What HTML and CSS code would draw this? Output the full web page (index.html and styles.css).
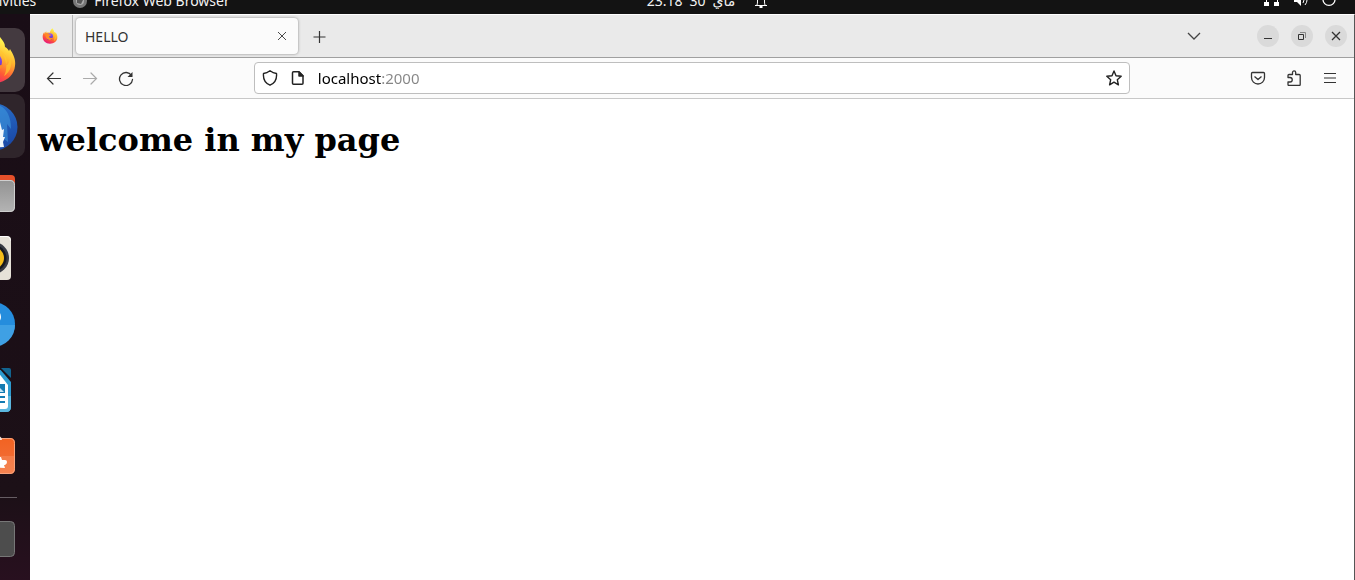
FILE: index.html
```html
<!DOCTYPE html>
<html lang="en">
<head>
<meta charset="utf-8">
<title>HELLO</title>
<link rel="stylesheet" href="styles.css">
</head>
<body>
<svg width="0" height="0" class="defs" aria-hidden="true">
  <defs>
    <linearGradient id="flame" x1="0.8" y1="0" x2="0.3" y2="1">
      <stop offset="0.1" stop-color="#fff44f"/><stop offset="0.4" stop-color="#ffb62e"/>
      <stop offset="0.68" stop-color="#ff5a36"/><stop offset="1" stop-color="#e6127f"/>
    </linearGradient>
    <linearGradient id="globe" x1="0" y1="0" x2="0" y2="1">
      <stop offset="0" stop-color="#9059ff"/><stop offset="1" stop-color="#5b2bb5"/>
    </linearGradient>
    <linearGradient id="bird" x1="0" y1="0" x2="0.4" y2="1">
      <stop offset="0" stop-color="#2b78d0"/><stop offset="1" stop-color="#1b4aa8"/>
    </linearGradient>
    <linearGradient id="steel" x1="0" y1="0" x2="0" y2="1">
      <stop offset="0" stop-color="#929292"/><stop offset="1" stop-color="#b4b4b4"/>
    </linearGradient>
    <linearGradient id="bag" x1="0" y1="0" x2="0" y2="1">
      <stop offset="0" stop-color="#f26322"/><stop offset="0.5" stop-color="#f26a30"/>
      <stop offset="0.5" stop-color="#f47c48"/><stop offset="1" stop-color="#f58350"/>
    </linearGradient>
    <symbol id="firefox" viewBox="0 0 48 48">
      <path fill="url(#flame)" d="M31 1c3 4 5 6 5 10 2 1 3 2 4 4l1-2c3 5 6 10 5 17C45 40 36 47 24 47 11 47 2 38 2 26c0-6 2-10 5-14l1 5c1-3 3-5 5-7v4c4-1 7-1 10 0 2-5 4-9 8-13z"/>
      <circle cx="23" cy="26" r="10" fill="url(#globe)"/>
      <path fill="#ff8a26" d="M12 16c4-1 7 0 9 3l6 1c0 3-4 4-6 5 0 3 3 6 7 5 3 0 4-2 6-1-2 5-8 8-14 6-8-2-12-12-8-19z"/>
      <path fill="#ffc72e" d="M30 14c7 3 9 9 7 16 3-2 4-5 4-9 3 8 0 15-6 19 4-7 3-19-5-26z" opacity=".7"/>
    </symbol>
  </defs>
</svg>

<div class="desktop">
  <header class="topbar">
    <div class="topbar-left">
      <button class="plain">Activities</button>
      <button class="plain app-menu">
        <svg width="14" height="14" viewBox="0 0 14 14"><circle cx="7" cy="7" r="7" fill="#777"/><circle cx="7" cy="7" r="4" fill="#aaa"/><path d="M4 5l6 1-2 4-4-1z" fill="#555"/></svg>
        Firefox Web Browser
      </button>
    </div>
    <button class="plain clock">
      <span>23:18</span><span>30</span><bdi>ماي</bdi>
      <svg class="bell" width="14" height="16" viewBox="0 0 14 16" fill="none" stroke="#fff"><path d="M1 12.500h12M3 12C4 10 3 6 4 4s5-2 6 0 0 6 1 8"/><path d="M5.500 14h3" stroke-width="2"/></svg>
    </button>
    <div class="topbar-right">
      <svg width="16" height="16" viewBox="0 0 16 16"><path d="M8 0v5M2.500 12V5h11v7" fill="none" stroke="#fff"/><path d="M0 10h5v4H0zM10 10h5v4h-5zM5 0h5v4H5z" fill="#fff"/></svg>
      <svg width="16" height="16" viewBox="0 0 16 16"><path d="M1 5h3l4-4v13l-4-4H1z" fill="#fff"/><path d="M10 5q2 3 0 6M12 3q4 5 0 10" fill="none" stroke="#fff"/></svg>
      <svg width="14" height="14" viewBox="0 0 14 14" fill="none" stroke="#fff" stroke-width="1.300"><path d="M3 2a6 6 0 1 0 8 0M7 0v6"/></svg>
    </div>
  </header>

  <div class="workspace">
    <nav class="dock" aria-label="Dock">
      <button class="tile tile-focused" aria-label="Firefox"><svg width="48" height="48"><use href="#firefox"/></svg></button>
      <button class="tile tile-open" aria-label="Thunderbird"><svg width="64" height="64" viewBox="0 0 64 64"><circle cx="33" cy="33" r="23.500" fill="url(#bird)"/><path d="M34 10q16 4 16 25l-4-5 1 18-7-5z" fill="#3f9be0" opacity=".55"/><path d="M30 22l6 2 3 4 2 8 2-1-1 8 2 0-2 5 1 5-13 1z" fill="#f2f7fc"/></svg></button>
      <button class="tile" aria-label="Files"><svg width="64" height="64" viewBox="0 0 64 64"><path d="M10 15h40q4 0 4 4v14H10z" fill="#e5502a"/><path d="M10 20h39q5 0 5 5v22q0 5-5 5H10z" fill="url(#steel)"/><path d="M10 20.500h39q4.500 0 4.500 5v21q0 5-5 5H10" fill="none" stroke="#cfcfcf"/></svg></button>
      <button class="tile" aria-label="Rhythmbox"><svg width="64" height="64" viewBox="0 0 64 64"><rect x="14" y="10" width="36" height="44" rx="4" fill="#e6e2d8"/><path d="M18 10.500h28q3.500 0 3.500 4" fill="none" stroke="#fff"/><circle cx="32" cy="32" r="16" fill="#383b43"/><circle cx="32" cy="32" r="13.500" fill="#17191f"/><circle cx="32" cy="32" r="11" fill="#f5bd18"/></svg></button>
      <button class="tile" aria-label="Help"><svg width="64" height="64" viewBox="0 0 64 64"><circle cx="32" cy="32" r="22" fill="#258ddd"/><path d="M10 33h44a22 22 0 0 1-44 0z" fill="#3fa0e4"/><path d="M25 26q0-7 7-7 6 0 6.500 6 0 4-6.500 8v5" fill="none" stroke="#fff" stroke-width="3"/></svg></button>
      <button class="tile" aria-label="LibreOffice Writer"><svg width="64" height="64" viewBox="0 0 64 64"><path d="M14 10h24l12 14v25q0 5-5 5H14z" fill="#2d9bcf"/><path d="M14 38h36v11q0 5-5 5H14z" fill="#5cb7de"/><path d="M40 10h8q2 0 2 2v8z" fill="#12648f"/><path d="M16 13h20l11 14v21q0 3-3 3H16z" fill="#fff"/><path d="M31 26h13v9H31zM18 38h26v2H18zM18 43h26v2H18z" fill="#147bb2"/><path d="M32 34l6-5 5 5z" fill="#bfe4f5"/></svg></button>
      <button class="tile" aria-label="Software"><svg width="64" height="64" viewBox="0 0 64 64"><path d="M10 14h39q5 0 5 5v26q0 5-5 5H10z" fill="url(#bag)"/><path d="M10 14.500h39q4.500 0 4.500 5v25q0 5-5 5H10" fill="none" stroke="#f7a37d"/><path d="M24 16q0-4 8-4t8 4" fill="none" stroke="#f5e1d7" stroke-width="2"/><path d="M26 43l8-10h6l1 3h3q2 0 2 2t-2 3h-1l1 3z" fill="#fff"/></svg></button>
      <hr class="dock-rule">
      <button class="tile" aria-label="Disk"><svg width="64" height="64" viewBox="0 0 64 64"><rect x="10.500" y="14.500" width="43" height="35" rx="4" fill="#4d4d4d" stroke="#777"/></svg></button>
    </nav>

    <section class="window">
      <div class="tabstrip">
        <button class="plain pinned" aria-label="Firefox View"><svg width="16" height="16"><use href="#firefox"/></svg></button>
        <div class="tab">
          <span>HELLO</span>
          <button class="plain" aria-label="Close tab"><svg width="16" height="16" viewBox="0 0 16 16" fill="none" stroke="#4a4a4a"><path d="M4 4l8 8M12 4l-8 8"/></svg></button>
        </div>
        <button class="plain" aria-label="New tab"><svg width="16" height="16" viewBox="0 0 16 16" fill="none" stroke="#333" stroke-width="1.200"><path d="M8.500 3v12M2.500 9h12"/></svg></button>
        <div class="window-controls">
          <button class="plain list-tabs" aria-label="List all tabs"><svg width="16" height="16" viewBox="0 0 16 16" fill="none" stroke="#444" stroke-width="1.300"><path d="M2 5l6 6 6-6"/></svg></button>
          <button class="round" aria-label="Minimize"><svg width="16" height="16" viewBox="0 0 16 16" fill="none" stroke="#333"><path d="M4 10.500h8"/></svg></button>
          <button class="round" aria-label="Restore"><svg width="16" height="16" viewBox="0 0 16 16" fill="none" stroke="#333"><path d="M4.500 6.500h5v5h-5z"/><path d="M6 4.500h5.500V10" stroke="#888"/></svg></button>
          <button class="round" aria-label="Close"><svg width="16" height="16" viewBox="0 0 16 16" fill="none" stroke="#333" stroke-width="1.300"><path d="M4 4l8 8M12 4l-8 8"/></svg></button>
        </div>
      </div>

      <div class="navbar">
        <div class="nav-group">
          <button class="plain" aria-label="Back"><svg width="16" height="16" viewBox="0 0 16 16" fill="none" stroke="#333" stroke-width="1.200" stroke-linecap="round"><path d="M1.500 8.500h13M7 3L1.500 8.500 7 14"/></svg></button>
          <button class="plain" aria-label="Forward"><svg width="16" height="16" viewBox="0 0 16 16" fill="none" stroke="#aaa" stroke-width="1.200" stroke-linecap="round"><path d="M1.500 8.500h13M9 3l5.500 5.500L9 14"/></svg></button>
          <button class="plain" aria-label="Reload"><svg width="16" height="16" viewBox="0 0 16 16" fill="none" stroke="#333" stroke-width="1.300" stroke-linecap="round"><path d="M13.500 5.500a6.500 6.500 0 1 0 1 4"/><path d="M14.500 2v5h-5z" fill="#333" stroke="none"/></svg></button>
        </div>
        <form class="urlbar">
          <button type="button" class="plain" aria-label="Tracking protection"><svg width="16" height="16" viewBox="0 0 16 16" fill="none" stroke="#222" stroke-width="1.400" stroke-linejoin="round"><path d="M8 .8C6 2.300 4 3.200 1.500 3.500c-.5 5 1.500 9.500 6.500 11.700 5-2.200 7-6.700 6.500-11.700C12 3.200 10 2.300 8 .8z"/></svg></button>
          <button type="button" class="plain" aria-label="Site information"><svg width="16" height="16" viewBox="0 0 16 16" fill="none" stroke="#222" stroke-width="1.500" stroke-linejoin="round"><path d="M3.500 1.700H9l4 4v7.600q0 1-1 1H3.500q-1 0-1-1V2.700q0-1 1-1z"/><path d="M9 2v4h4z" fill="#222"/></svg></button>
          <input type="text" value="localhost:2000" aria-label="Address" spellcheck="false">
          <button type="button" class="plain" aria-label="Bookmark"><svg width="16" height="16" viewBox="0 0 16 16" fill="none" stroke="#222" stroke-width="1.400" stroke-linejoin="round"><path d="M8 1l2 4.700 5.200.5-3.900 3.500 1.100 5.100L8 12.200l-4.400 2.600 1.100-5.100L.8 6.200 6 5.700z"/></svg></button>
        </form>
        <div class="nav-group nav-end">
          <button class="plain" aria-label="Pocket"><svg width="16" height="16" viewBox="0 0 16 16" fill="none" stroke="#333" stroke-width="1.300" stroke-linejoin="round"><path d="M2.500 2.500h11q1 0 1 1V7.500a6.500 6.500 0 0 1-13 0V3.500q0-1 1-1z"/><path d="M4.500 6.500L8 9.500l3.500-3"/></svg></button>
          <button class="plain" aria-label="Extensions"><svg width="16" height="16" viewBox="0 0 16 16" fill="none" stroke="#333" stroke-width="1.300" stroke-linejoin="round"><path d="M2 7V5.500q0-1 1-1h3.500V2.500a1.600 1.600 0 0 1 3.200 0v2h3.500q1 0 1 1v9q0 1-1 1H3q-1 0-1-1V12h2a2 2 0 0 0 0-4.500H2z"/></svg></button>
          <button class="plain" aria-label="Menu"><svg width="16" height="16" viewBox="0 0 16 16" fill="none" stroke="#333" stroke-width="1.200"><path d="M2 3.500h12M2 8h12M2 12.500h12"/></svg></button>
        </div>
      </div>

      <main class="page"><h1>welcome in my page</h1></main>
    </section>
  </div>
</div>
</body>
</html>
```
FILE: styles.css
```css
* { box-sizing: border-box; }

body {
  margin: 0;
  overflow: hidden;
  background: #1c0f17;
  font: 14px/20px "Noto Sans", "DejaVu Sans", sans-serif;
}

.defs { position: absolute; }
svg { display: block; flex: none; }

button {
  display: flex;
  align-items: center;
  justify-content: center;
  padding: 0;
  border: 0;
  background: none;
  color: inherit;
  font: inherit;
}

/* The desktop runs past the top and left edges of the viewport. */
.desktop {
  display: flex;
  flex-direction: column;
  min-height: calc(100vh + 14px);
  margin: -14px 0 0 -42px;
}

.topbar {
  display: grid;
  grid-template-columns: 54fr auto 46fr;
  align-items: center;
  height: 28px;
  background: #131313;
  color: #f2f2f2;
}
.topbar button { padding-top: 2px; }
.topbar-left { display: flex; gap: 37px; padding-left: 20px; }
.app-menu { gap: 7px; }
.clock { gap: 7px; }
.bell { margin-left: 12px; }
.topbar-right {
  display: flex;
  align-items: center;
  justify-content: flex-end;
  gap: 13px;
  padding-right: 19px;
}

.workspace { display: flex; flex: 1; }

.dock {
  display: flex;
  flex-direction: column;
  align-items: center;
  gap: 2px;
  width: 72px;
  padding: 14px 2px 0 0;
  background: linear-gradient(#190d16, #1c1017 85%, #28101f);
}
.tile { width: 64px; height: 64px; border-radius: 10px; }
.tile-focused { background: #443a40; }
.tile-open { background: #2f252b; }
.dock-rule {
  width: 48px;
  height: 1px;
  margin: 7px 0;
  border: 0;
  background: #665d63;
}

.window {
  display: flex;
  flex: 1;
  flex-direction: column;
  border-top: 1px solid #fff;
  border-right: 1px solid #555;
  background: #fff;
}

.tabstrip {
  display: flex;
  align-items: center;
  height: 43px;
  border-bottom: 1px solid #a0a0a0;
  background: #eaeaea;
  color: #333;
}
.pinned {
  align-self: stretch;
  width: 43px;
  padding-right: 3px;
  border-right: 1px solid #b8b8b8;
}
.tab {
  display: flex;
  align-items: center;
  justify-content: space-between;
  width: 222px;
  height: 36px;
  margin: 0 13px 0 3px;
  padding: 0 8px 0 9px;
  border-radius: 4px;
  background: #fbfbfb;
  box-shadow: 0 0 3px #888;
}
.tab span { padding-top: 2px; }
.window-controls {
  display: flex;
  align-items: center;
  gap: 12px;
  margin-left: auto;
  padding-right: 7px;
}
.list-tabs { margin-right: 43px; }
.round { width: 22px; height: 22px; border-radius: 50%; background: #dadada; }

.navbar {
  display: flex;
  align-items: center;
  height: 41px;
  border-bottom: 1px solid #c8c8c8;
  background: #fbfbfb;
}
.nav-group { display: flex; flex: 1 0 0; gap: 20px; padding-left: 16px; }
.nav-end { justify-content: flex-end; padding: 0 16px 0 0; }

.urlbar {
  display: flex;
  flex: none;
  width: 66.2%;
  align-items: center;
  gap: 12px;
  height: 32px;
  padding: 0 7px;
  border: 1px solid #bebebe;
  border-radius: 4px;
  background: #fff;
}
.urlbar input {
  flex: 1;
  min-width: 0;
  height: 24px;
  padding: 0;
  border: 0;
  outline: 0;
  /* Host name dark, port grey. */
  background: linear-gradient(to right, #000 63px, #858585 63px);
  -webkit-background-clip: text;
  background-clip: text;
  color: transparent;
  font: inherit;
  font-size: 15px;
}

.page { flex: 1; padding: 22px 8px; }
.page h1 {
  margin: 0;
  color: #000;
  font: bold 32px/38px "DejaVu Serif", serif;
}
```
